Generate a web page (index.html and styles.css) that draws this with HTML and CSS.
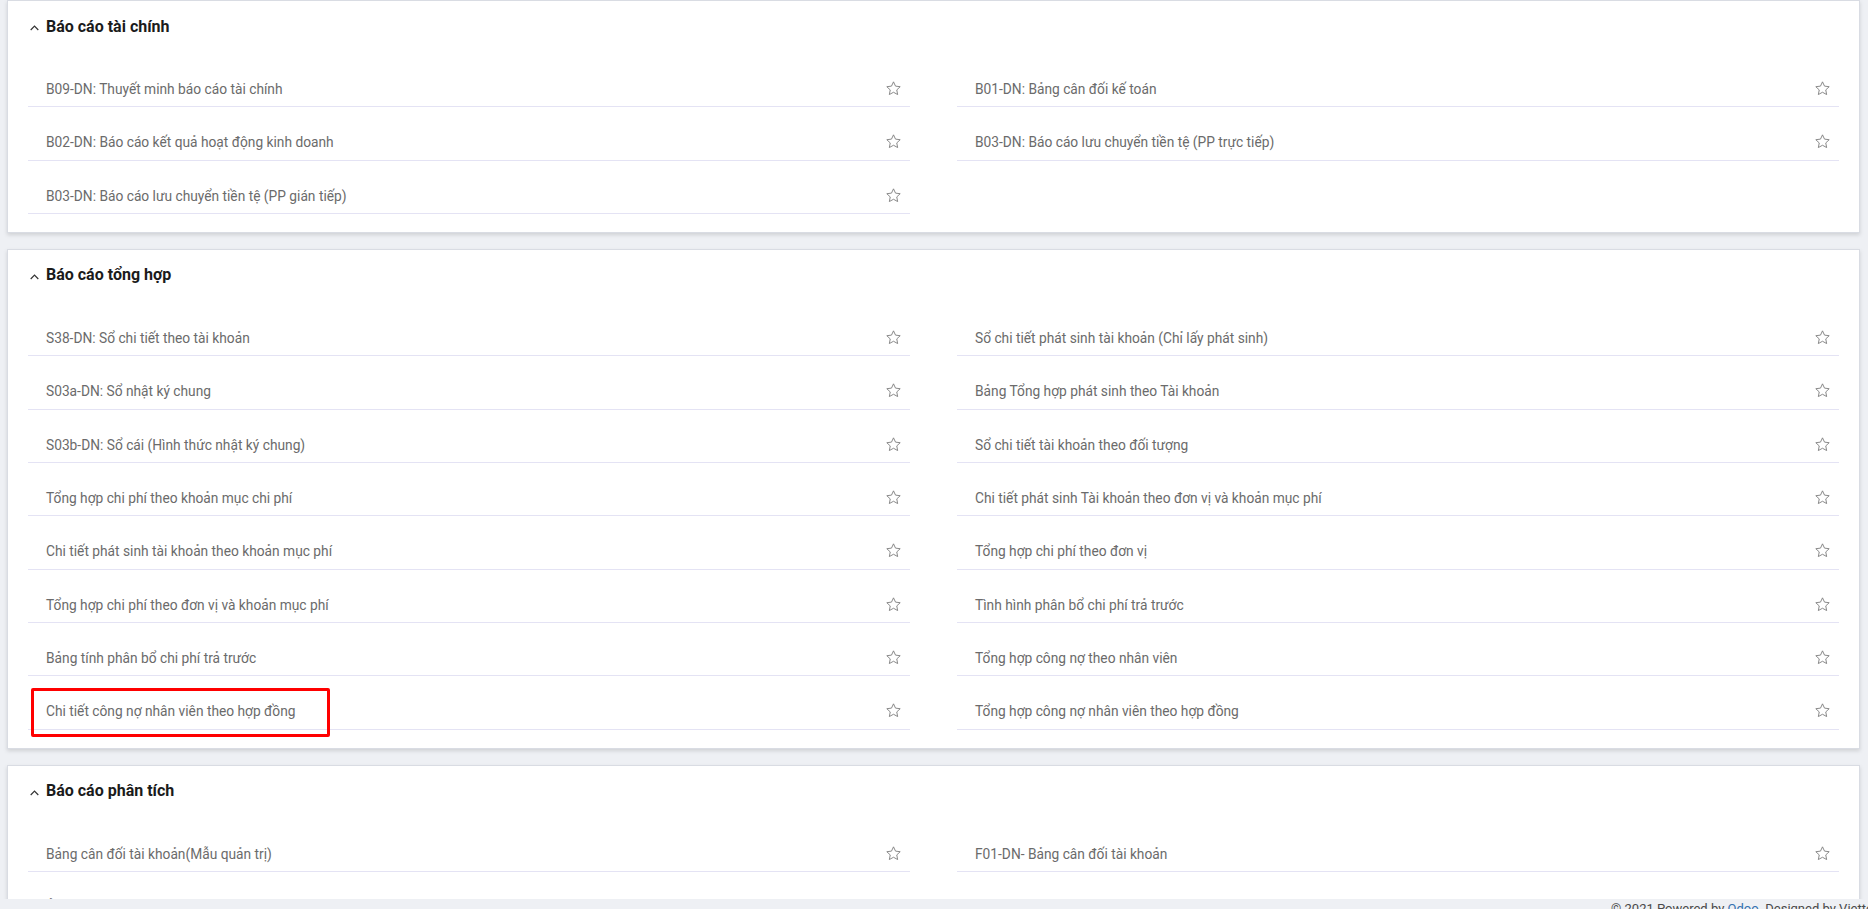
FILE: index.html
```html
<!DOCTYPE html>
<html lang="vi">
<head>
<meta charset="utf-8">
<title>Báo cáo</title>
<link rel="stylesheet" href="styles.css">
</head>
<body>
<div class="app">
  <main class="main">
    <section class="card">
      <div class="card-head">
        <svg class="chev" width="9" height="6" viewBox="0 0 9 6"><polyline points="0.7,5 4.5,1.2 8.3,5" fill="none" stroke="#333" stroke-width="1.2"/></svg>
        <span class="card-title">Báo cáo tài chính</span>
      </div>
      <div class="grid">
        <div class="item"><span>B09-DN: Thuyết minh báo cáo tài chính</span><svg class="star" viewBox="0 0 24 24"><path d="M12 2.6l2.85 6.05 6.6.8-4.85 4.55 1.25 6.55L12 17.3l-5.85 3.25 1.25-6.55L2.55 9.45l6.6-.8z"/></svg></div>
        <div class="item"><span>B01-DN: Bảng cân đối kế toán</span><svg class="star" viewBox="0 0 24 24"><path d="M12 2.6l2.85 6.05 6.6.8-4.85 4.55 1.25 6.55L12 17.3l-5.85 3.25 1.25-6.55L2.55 9.45l6.6-.8z"/></svg></div>
        <div class="item"><span>B02-DN: Báo cáo kết quả hoạt động kinh doanh</span><svg class="star" viewBox="0 0 24 24"><path d="M12 2.6l2.85 6.05 6.6.8-4.85 4.55 1.25 6.55L12 17.3l-5.85 3.25 1.25-6.55L2.55 9.45l6.6-.8z"/></svg></div>
        <div class="item"><span>B03-DN: Báo cáo lưu chuyển tiền tệ (PP trực tiếp)</span><svg class="star" viewBox="0 0 24 24"><path d="M12 2.6l2.85 6.05 6.6.8-4.85 4.55 1.25 6.55L12 17.3l-5.85 3.25 1.25-6.55L2.55 9.45l6.6-.8z"/></svg></div>
        <div class="item"><span>B03-DN: Báo cáo lưu chuyển tiền tệ (PP gián tiếp)</span><svg class="star" viewBox="0 0 24 24"><path d="M12 2.6l2.85 6.05 6.6.8-4.85 4.55 1.25 6.55L12 17.3l-5.85 3.25 1.25-6.55L2.55 9.45l6.6-.8z"/></svg></div>
      </div>
    </section>

    <section class="card">
      <div class="card-head">
        <svg class="chev" width="9" height="6" viewBox="0 0 9 6"><polyline points="0.7,5 4.5,1.2 8.3,5" fill="none" stroke="#333" stroke-width="1.2"/></svg>
        <span class="card-title">Báo cáo tổng hợp</span>
      </div>
      <div class="grid">
        <div class="item"><span>S38-DN: Sổ chi tiết theo tài khoản</span><svg class="star" viewBox="0 0 24 24"><path d="M12 2.6l2.85 6.05 6.6.8-4.85 4.55 1.25 6.55L12 17.3l-5.85 3.25 1.25-6.55L2.55 9.45l6.6-.8z"/></svg></div>
        <div class="item"><span>Sổ chi tiết phát sinh tài khoản (Chỉ lấy phát sinh)</span><svg class="star" viewBox="0 0 24 24"><path d="M12 2.6l2.85 6.05 6.6.8-4.85 4.55 1.25 6.55L12 17.3l-5.85 3.25 1.25-6.55L2.55 9.45l6.6-.8z"/></svg></div>
        <div class="item"><span>S03a-DN: Sổ nhật ký chung</span><svg class="star" viewBox="0 0 24 24"><path d="M12 2.6l2.85 6.05 6.6.8-4.85 4.55 1.25 6.55L12 17.3l-5.85 3.25 1.25-6.55L2.55 9.45l6.6-.8z"/></svg></div>
        <div class="item"><span>Bảng Tổng hợp phát sinh theo Tài khoản</span><svg class="star" viewBox="0 0 24 24"><path d="M12 2.6l2.85 6.05 6.6.8-4.85 4.55 1.25 6.55L12 17.3l-5.85 3.25 1.25-6.55L2.55 9.45l6.6-.8z"/></svg></div>
        <div class="item"><span>S03b-DN: Sổ cái (Hình thức nhật ký chung)</span><svg class="star" viewBox="0 0 24 24"><path d="M12 2.6l2.85 6.05 6.6.8-4.85 4.55 1.25 6.55L12 17.3l-5.85 3.25 1.25-6.55L2.55 9.45l6.6-.8z"/></svg></div>
        <div class="item"><span>Sổ chi tiết tài khoản theo đối tượng</span><svg class="star" viewBox="0 0 24 24"><path d="M12 2.6l2.85 6.05 6.6.8-4.85 4.55 1.25 6.55L12 17.3l-5.85 3.25 1.25-6.55L2.55 9.45l6.6-.8z"/></svg></div>
        <div class="item"><span>Tổng hợp chi phí theo khoản mục chi phí</span><svg class="star" viewBox="0 0 24 24"><path d="M12 2.6l2.85 6.05 6.6.8-4.85 4.55 1.25 6.55L12 17.3l-5.85 3.25 1.25-6.55L2.55 9.45l6.6-.8z"/></svg></div>
        <div class="item"><span>Chi tiết phát sinh Tài khoản theo đơn vị và khoản mục phí</span><svg class="star" viewBox="0 0 24 24"><path d="M12 2.6l2.85 6.05 6.6.8-4.85 4.55 1.25 6.55L12 17.3l-5.85 3.25 1.25-6.55L2.55 9.45l6.6-.8z"/></svg></div>
        <div class="item"><span>Chi tiết phát sinh tài khoản theo khoản mục phí</span><svg class="star" viewBox="0 0 24 24"><path d="M12 2.6l2.85 6.05 6.6.8-4.85 4.55 1.25 6.55L12 17.3l-5.85 3.25 1.25-6.55L2.55 9.45l6.6-.8z"/></svg></div>
        <div class="item"><span>Tổng hợp chi phí theo đơn vị</span><svg class="star" viewBox="0 0 24 24"><path d="M12 2.6l2.85 6.05 6.6.8-4.85 4.55 1.25 6.55L12 17.3l-5.85 3.25 1.25-6.55L2.55 9.45l6.6-.8z"/></svg></div>
        <div class="item"><span>Tổng hợp chi phí theo đơn vị và khoản mục phí</span><svg class="star" viewBox="0 0 24 24"><path d="M12 2.6l2.85 6.05 6.6.8-4.85 4.55 1.25 6.55L12 17.3l-5.85 3.25 1.25-6.55L2.55 9.45l6.6-.8z"/></svg></div>
        <div class="item"><span>Tình hình phân bổ chi phí trả trước</span><svg class="star" viewBox="0 0 24 24"><path d="M12 2.6l2.85 6.05 6.6.8-4.85 4.55 1.25 6.55L12 17.3l-5.85 3.25 1.25-6.55L2.55 9.45l6.6-.8z"/></svg></div>
        <div class="item"><span>Bảng tính phân bổ chi phí trả trước</span><svg class="star" viewBox="0 0 24 24"><path d="M12 2.6l2.85 6.05 6.6.8-4.85 4.55 1.25 6.55L12 17.3l-5.85 3.25 1.25-6.55L2.55 9.45l6.6-.8z"/></svg></div>
        <div class="item"><span>Tổng hợp công nợ theo nhân viên</span><svg class="star" viewBox="0 0 24 24"><path d="M12 2.6l2.85 6.05 6.6.8-4.85 4.55 1.25 6.55L12 17.3l-5.85 3.25 1.25-6.55L2.55 9.45l6.6-.8z"/></svg></div>
        <div class="item"><span>Chi tiết công nợ nhân viên theo hợp đồng</span><svg class="star" viewBox="0 0 24 24"><path d="M12 2.6l2.85 6.05 6.6.8-4.85 4.55 1.25 6.55L12 17.3l-5.85 3.25 1.25-6.55L2.55 9.45l6.6-.8z"/></svg><div class="highlight"></div></div>
        <div class="item"><span>Tổng hợp công nợ nhân viên theo hợp đồng</span><svg class="star" viewBox="0 0 24 24"><path d="M12 2.6l2.85 6.05 6.6.8-4.85 4.55 1.25 6.55L12 17.3l-5.85 3.25 1.25-6.55L2.55 9.45l6.6-.8z"/></svg></div>
      </div>
    </section>

    <section class="card">
      <div class="card-head">
        <svg class="chev" width="9" height="6" viewBox="0 0 9 6"><polyline points="0.7,5 4.5,1.2 8.3,5" fill="none" stroke="#333" stroke-width="1.2"/></svg>
        <span class="card-title">Báo cáo phân tích</span>
      </div>
      <div class="grid">
        <div class="item"><span>Bảng cân đối tài khoản(Mẫu quản trị)</span><svg class="star" viewBox="0 0 24 24"><path d="M12 2.6l2.85 6.05 6.6.8-4.85 4.55 1.25 6.55L12 17.3l-5.85 3.25 1.25-6.55L2.55 9.45l6.6-.8z"/></svg></div>
        <div class="item"><span>F01-DN- Bảng cân đối tài khoản</span><svg class="star" viewBox="0 0 24 24"><path d="M12 2.6l2.85 6.05 6.6.8-4.85 4.55 1.25 6.55L12 17.3l-5.85 3.25 1.25-6.55L2.55 9.45l6.6-.8z"/></svg></div>
        <div class="item"><span>Ảnh hưởng tỷ giá theo tài khoản</span><svg class="star" viewBox="0 0 24 24"><path d="M12 2.6l2.85 6.05 6.6.8-4.85 4.55 1.25 6.55L12 17.3l-5.85 3.25 1.25-6.55L2.55 9.45l6.6-.8z"/></svg></div>
        <div class="item"><span>Phân tích chi phí theo đơn vị</span><svg class="star" viewBox="0 0 24 24"><path d="M12 2.6l2.85 6.05 6.6.8-4.85 4.55 1.25 6.55L12 17.3l-5.85 3.25 1.25-6.55L2.55 9.45l6.6-.8z"/></svg></div>
      </div>
    </section>
  </main>
  <footer class="footer">
    <span class="footer-text">© 2021 Powered by <a class="footer-link" href="#">Odoo</a>. Designed by Viettel</span>
  </footer>
</div>
</body>
</html>
```

FILE: styles.css
```css
html, body {
  margin: 0;
  padding: 0;
  height: 909px;
  overflow: hidden;
}

body {
  background: #eef0f4;
  font-family: Roboto, "Liberation Sans", Arial, sans-serif;
  color: #212529;
}

.app {
  display: flex;
  flex-direction: column;
  height: 909px;
}

.main {
  height: 899px;
  flex: 0 0 899px;
  overflow: hidden;
  padding: 0 8px 0 7px;
  box-sizing: border-box;
}

.card {
  background: #ffffff;
  border: 1px solid #d9dce3;
  box-shadow: 0 2px 4px rgba(0, 0, 0, 0.13);
  margin-bottom: 16px;
  padding: 0 20px 18px 20px;
}

.card-head {
  height: 53px;
  display: flex;
  align-items: center;
  padding: 0 0 2px 2px;
  box-sizing: border-box;
}

.chev {
  display: block;
  margin-right: 7px;
  margin-top: 3px;
}

.card-title {
  font-size: 16px;
  font-weight: 700;
  color: #1b1b1b;
  line-height: 22px;
}

.grid {
  display: grid;
  grid-template-columns: 1fr 1fr;
  column-gap: 47px;
}

.item {
  position: relative;
  height: 53.333px;
  box-sizing: border-box;
  border-bottom: 1px solid #e4e3f4;
  display: flex;
  justify-content: space-between;
  align-items: flex-start;
  padding: 24px 8px 0 18px;
  font-size: 13.75px;
  line-height: 22px;
  color: #6b6b6b;
}

.star {
  width: 17px;
  height: 17px;
  margin-top: 2px;
  flex: 0 0 auto;
}

.star path {
  fill: none;
  stroke: #7a7a7a;
  stroke-width: 1.25;
  stroke-linejoin: miter;
}

.highlight {
  position: absolute;
  left: 3px;
  top: 12px;
  width: 299px;
  height: 49px;
  border: 3px solid #ff0000;
  border-radius: 2px;
  box-sizing: border-box;
  pointer-events: none;
}

.footer {
  flex: 0 0 30px;
  display: flex;
  justify-content: flex-end;
  background: #eef0f4;
}

.footer-text {
  white-space: nowrap;
  font-size: 13px;
  line-height: 18px;
  color: #4a4a4a;
  margin-right: -8px;
  padding-top: 1px;
}

.footer-link {
  color: #3572b0;
  text-decoration: none;
}
```
